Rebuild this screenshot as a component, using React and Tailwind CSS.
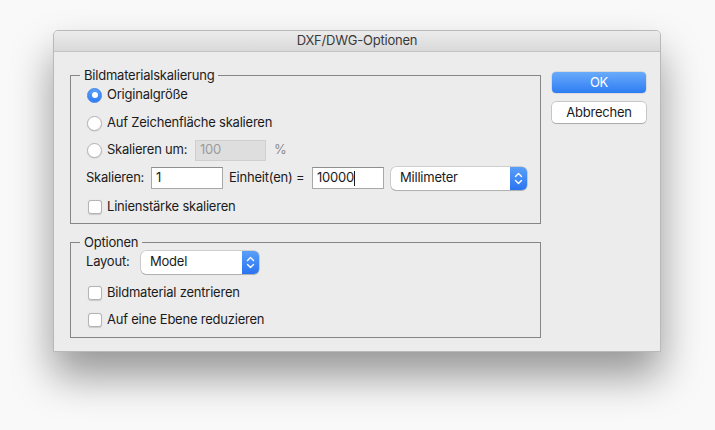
import React from 'react';

const FONT = { fontFamily: '"Inter", "Liberation Sans", sans-serif' };

const Radio = ({ checked }) =>
  checked ? (
    <span className="w-[15px] h-[15px] rounded-full bg-gradient-to-b from-[#5aa0f9] to-[#2f7cf4] border border-[#3d84ee] flex items-center justify-center shrink-0">
      <span className="w-[6px] h-[6px] rounded-full bg-white" />
    </span>
  ) : (
    <span className="w-[15px] h-[15px] rounded-full bg-white border border-[#b4b4b4] shadow-[0_0.5px_1px_rgba(0,0,0,0.15)] shrink-0" />
  );

const Checkbox = () => (
  <span className="w-[14px] h-[14px] rounded-[3px] bg-white border border-[#b4b4b4] shadow-[0_0.5px_1px_rgba(0,0,0,0.15)] shrink-0" />
);

const Field = ({ value, width = 'w-[72px]', caret }) => (
  <span className={`${width} h-[22px] bg-white border border-[#a8a8a8] border-t-[#8f8f8f] flex items-center pl-[4px] text-[13px] text-[#1b1b1b]`}>
    {value}
    {caret && <span className="w-px h-[15px] bg-[#1b1b1b]" />}
  </span>
);

const Chevrons = () => (
  <svg width="9" height="13" viewBox="0 0 9 13" fill="none" stroke="white" strokeWidth="1.4" strokeLinecap="round" strokeLinejoin="round">
    <path d="M1.5 4.5 L4.5 1.5 L7.5 4.5" />
    <path d="M1.5 8.5 L4.5 11.5 L7.5 8.5" />
  </svg>
);

const Select = ({ label, width }) => (
  <span className={`${width} h-[23px] rounded-[5px] bg-white shadow-[0_0_0_0.5px_rgba(0,0,0,0.25),0_1px_1px_rgba(0,0,0,0.15)] flex items-center overflow-hidden`}>
    <span className="flex-1 pl-[9px] text-[13px] text-[#1b1b1b]">{label}</span>
    <span className="w-[17px] h-full bg-gradient-to-b from-[#5a9ff8] to-[#2a73f1] flex items-center justify-center">
      <Chevrons />
    </span>
  </span>
);

const Group = ({ title, children, className = '' }) => (
  <fieldset className={`border border-[#868686] ${className}`}>
    <legend className="ml-[9px] px-[4px] text-[13px] leading-[16px] text-[#1b1b1b]">{title}</legend>
    {children}
  </fieldset>
);

const App = () => (
  <div className="w-[715px] h-[430px] bg-[#f9f9f9] pt-[30px] pl-[53px] text-[#1b1b1b] tracking-[-0.22px]" style={FONT}>
    <div className="w-[608px] h-[322px] bg-[#ececec] rounded-t-[5px] border border-[#b9b9b9] shadow-[0_24px_42px_rgba(0,0,0,0.4)] flex flex-col overflow-hidden">
      {/* Titelleiste */}
      <div className="h-[21px] bg-gradient-to-b from-[#ececec] to-[#d9d9d9] border-b border-[#c4c4c4] flex items-center justify-center text-[13px] text-[#3a3a3a]">
        DXF/DWG-Optionen
      </div>

      <div className="flex pl-[16px] pt-[15px]">
        {/* Linke Spalte */}
        <div className="flex flex-col">
          <Group title="Bildmaterialskalierung" className="w-[471px] h-[157px]">
            <div className="flex flex-col gap-[5px] pl-[16px] pt-[1px]">
              <div className="h-[22px] flex items-center gap-[5px] text-[13px]">
                <Radio checked />
                <span>Originalgröße</span>
              </div>
              <div className="h-[22px] mt-[1px] flex items-center gap-[5px] text-[13px]">
                <Radio />
                <span>Auf Zeichenfläche skalieren</span>
              </div>
              <div className="h-[22px] flex items-center text-[13px]">
                <Radio />
                <span className="ml-[5px] w-[88px]">Skalieren um:</span>
                <span className="w-[71px] h-[21px] bg-[#dedede] border border-[#cfcfcf] flex items-center pl-[4px] text-[#9b9b9b]">100</span>
                <span className="ml-[8px] text-[#8c8c8c]">%</span>
              </div>
              <div className="h-[22px] mt-[1px] flex items-center text-[13px] -ml-[1px]">
                <span className="w-[65px]">Skalieren:</span>
                <Field value="1" />
                <span className="ml-[6px] w-[83px]">Einheit(en) =</span>
                <Field value="10000" caret />
                <span className="ml-[7px]">
                  <Select label="Millimeter" width="w-[136px]" />
                </span>
              </div>
              <div className="h-[22px] mt-[2px] flex items-center gap-[5px] text-[13px] pl-[1px]">
                <Checkbox />
                <span>Linienstärke skalieren</span>
              </div>
            </div>
          </Group>

          <Group title="Optionen" className="w-[471px] h-[104px] mt-[10px]">
            <div className="flex flex-col pl-[15px] pt-[1px]">
              <div className="h-[22px] flex items-center text-[13px]">
                <span className="w-[55px]">Layout:</span>
                <Select label="Model" width="w-[118px]" />
              </div>
              <div className="h-[22px] mt-[9px] flex items-center gap-[5px] text-[13px] pl-[2px]">
                <Checkbox />
                <span>Bildmaterial zentrieren</span>
              </div>
              <div className="h-[22px] mt-[5px] flex items-center gap-[5px] text-[13px] pl-[2px]">
                <Checkbox />
                <span>Auf eine Ebene reduzieren</span>
              </div>
            </div>
          </Group>
        </div>

        {/* Buttons */}
        <div className="flex flex-col gap-[9px] ml-[11px] pt-[5px]">
          <button className="w-[94px] h-[21px] rounded-[4px] bg-gradient-to-b from-[#69aafa] to-[#2c7cf3] text-white text-[13px] leading-none shadow-[0_0_0_0.5px_rgba(0,0,0,0.15)]">
            OK
          </button>
          <button className="w-[94px] h-[21px] rounded-[4px] bg-white text-[#1b1b1b] text-[13px] leading-none shadow-[0_0_0_0.5px_rgba(0,0,0,0.3),0_1px_1px_rgba(0,0,0,0.15)]">
            Abbrechen
          </button>
        </div>
      </div>
    </div>
  </div>
);

export default App;
